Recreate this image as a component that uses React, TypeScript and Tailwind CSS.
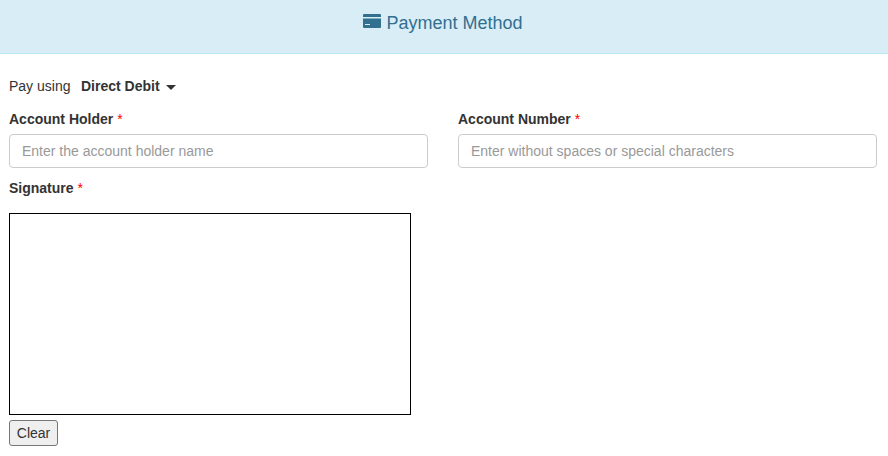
export default function App() {
  return (
    <div className="w-[888px] h-[456px] overflow-hidden bg-white text-[14px] leading-[20px] text-[#333333] font-['Arial','Liberation_Sans',sans-serif]">
      <div className="h-[54px] bg-[#d9edf7] border-b border-[#bce8f1] flex items-center justify-center text-[#31708f] text-[18px] leading-[20px] pb-[7px] pr-[2px]">
        <svg width="18" height="14" viewBox="0 0 18 14" className="mr-[5px] mb-[4px]">
          <path fill="#31708f" fillRule="evenodd" d="M1 0h16a1 1 0 0 1 1 1v2H0V1a1 1 0 0 1 1-1zM0 4.500h18V13a1 1 0 0 1-1 1H1a1 1 0 0 1-1-1zM2 10v1h5v-1z" />
        </svg>
        <span>Payment Method</span>
      </div>
      <div className="pl-[9px] pr-[11px]">
        <div className="flex items-center mt-[22px] h-[20px]">
          <span>Pay using</span>
          <span className="ml-[10.5px] font-bold">Direct Debit</span>
          <span className="ml-[6px] mt-[2px] w-0 h-0 border-x-[5px] border-x-transparent border-t-[5px] border-t-[#333333]" />
        </div>
        <div className="flex gap-[30px] mt-[13px]">
          <div className="flex-1">
            <div className="font-bold h-[20px]">Account Holder <span className="font-normal text-[#ff0000]">*</span></div>
            <input readOnly placeholder="Enter the account holder name" className="mt-[5px] block w-full h-[34px] px-[12px] border border-[#cccccc] rounded-[4px] text-[14px] placeholder:text-[#999999] outline-none" />
          </div>
          <div className="flex-1">
            <div className="font-bold h-[20px]">Account Number <span className="font-normal text-[#ff0000]">*</span></div>
            <input readOnly placeholder="Enter without spaces or special characters" className="mt-[5px] block w-full h-[34px] px-[12px] border border-[#cccccc] rounded-[4px] text-[14px] placeholder:text-[#999999] outline-none" />
          </div>
        </div>
        <div className="font-bold mt-[10px] h-[20px]">Signature <span className="font-normal text-[#ff0000]">*</span></div>
        <div className="mt-[15px] w-[402px] h-[202px] border border-black" />
        <button className="block mt-[5px] w-[49px] h-[26px] bg-[#efefef] border border-[#767676] rounded-[3px] text-[14px] text-[#333333]">Clear</button>
      </div>
    </div>
  );
}
